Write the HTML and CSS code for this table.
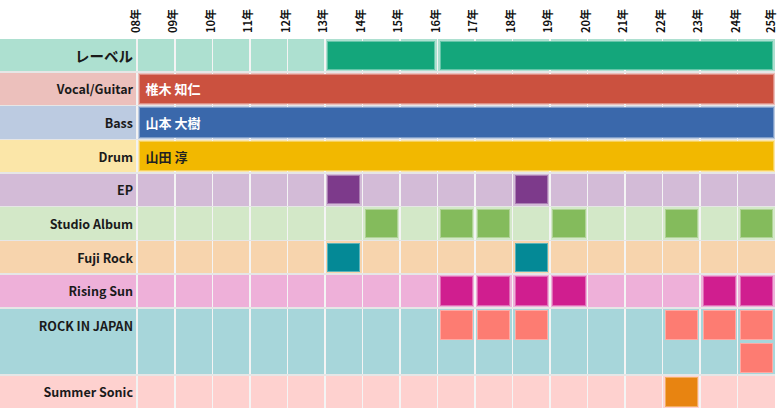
FILE: index.html
```html
<!DOCTYPE html>
<html lang="ja">
<head>
<meta charset="utf-8">
<link rel="stylesheet" href="styles.css">
</head>
<body>
<div class="chart">
  <div class="header">
    <div class="spacer"></div>
    <div class="year"><span>08年</span></div>
    <div class="year"><span>09年</span></div>
    <div class="year"><span>10年</span></div>
    <div class="year"><span>11年</span></div>
    <div class="year"><span>12年</span></div>
    <div class="year"><span>13年</span></div>
    <div class="year"><span>14年</span></div>
    <div class="year"><span>15年</span></div>
    <div class="year"><span>16年</span></div>
    <div class="year"><span>17年</span></div>
    <div class="year"><span>18年</span></div>
    <div class="year"><span>19年</span></div>
    <div class="year"><span>20年</span></div>
    <div class="year"><span>21年</span></div>
    <div class="year"><span>22年</span></div>
    <div class="year"><span>23年</span></div>
    <div class="year"><span>24年</span></div>
    <div class="year last"><span>25年</span></div>
  </div>

  <div class="rows">
    <div class="row r-label">
      <div class="label big">レーベル</div>
      <div class="track">
        <div class="bar c6 s3"></div>
        <div class="bar c9 s9"></div>
      </div>
    </div>

    <div class="row r-vocal">
      <div class="label">Vocal/Guitar</div>
      <div class="track">
        <div class="bar full"><span class="name">椎木 知仁</span></div>
      </div>
    </div>

    <div class="row r-bass">
      <div class="label">Bass</div>
      <div class="track">
        <div class="bar full"><span class="name">山本 大樹</span></div>
      </div>
    </div>

    <div class="row r-drum">
      <div class="label">Drum</div>
      <div class="track">
        <div class="bar full"><span class="name dark">山田 淳</span></div>
      </div>
    </div>

    <div class="row r-ep">
      <div class="label">EP</div>
      <div class="track">
        <div class="bar c6"></div>
        <div class="bar c11"></div>
      </div>
    </div>

    <div class="row r-album">
      <div class="label">Studio Album</div>
      <div class="track">
        <div class="bar c7"></div>
        <div class="bar c9"></div>
        <div class="bar c10"></div>
        <div class="bar c12"></div>
        <div class="bar c15"></div>
        <div class="bar c17"></div>
      </div>
    </div>

    <div class="row r-fuji">
      <div class="label">Fuji Rock</div>
      <div class="track">
        <div class="bar c6"></div>
        <div class="bar c11"></div>
      </div>
    </div>

    <div class="row r-rising">
      <div class="label">Rising Sun</div>
      <div class="track">
        <div class="bar c9"></div>
        <div class="bar c10"></div>
        <div class="bar c11"></div>
        <div class="bar c12"></div>
        <div class="bar c16"></div>
        <div class="bar c17"></div>
      </div>
    </div>

    <div class="row r-rij tall">
      <div class="label top">ROCK IN JAPAN</div>
      <div class="track two">
        <div class="bar c9"></div>
        <div class="bar c10"></div>
        <div class="bar c11"></div>
        <div class="bar c15"></div>
        <div class="bar c16"></div>
        <div class="bar c17"></div>
        <div class="bar c17 second"></div>
      </div>
    </div>

    <div class="row r-summer">
      <div class="label">Summer Sonic</div>
      <div class="track">
        <div class="bar c15"></div>
      </div>
    </div>
  </div>
</div>
</body>
</html>
```

FILE: styles.css
```css
html, body {
  margin: 0;
  padding: 0;
  background: #ffffff;
  overflow: hidden;
}

body {
  width: 780px;
  height: 410px;
  font-family: "Noto Sans CJK JP", "Noto Sans", sans-serif;
  color: #1a1a1a;
}

.chart {
  width: 780px;
}

/* header with rotated year labels */
.header {
  display: flex;
  height: 39px;
  width: 780px;
}

.spacer {
  flex: 0 0 116.5px;
}

.year {
  flex: 0 0 37.53px;
  display: flex;
  justify-content: center;
  align-items: flex-end;
  padding-bottom: 6px;
  box-sizing: border-box;
}

.year.last {
  flex: 0 0 24px;
  justify-content: flex-start;
  padding-left: 11px;
}

.year span {
  writing-mode: vertical-rl;
  text-orientation: sideways;
  transform: rotate(180deg);
  font-size: 11px;
  font-weight: 700;
  line-height: 11px;
  color: #111;
  white-space: nowrap;
}

/* rows */
.rows {
  display: flex;
  flex-direction: column;
  gap: 1.5px;
  background: #e6e6e6;
  width: 775px;
}

.row {
  display: flex;
  height: 32.2px;
  gap: 1.5px;
  background: #f2f2f2;
}

.row.tall {
  height: 65.9px;
}

.label {
  flex: 0 0 136px;
  display: flex;
  align-items: center;
  justify-content: flex-end;
  padding-right: 3px;
  box-sizing: border-box;
  font-size: 12.5px;
  font-weight: 700;
  white-space: nowrap;
}

.label.big {
  font-size: 14.5px;
  font-weight: 700;
}

.label.top {
  align-items: flex-start;
  padding-top: 7px;
}

.track {
  flex: 1 1 auto;
  display: grid;
  grid-template-columns: repeat(17, 1fr);
  grid-template-rows: 1fr;
  column-gap: 1.5px;
  background-image: repeating-linear-gradient(to right,
    transparent 0, transparent 36.03px,
    #f4f4f4 36.03px, #f4f4f4 37.53px);
}

.track.two {
  grid-template-rows: 1fr 1fr;
}

.bar {
  grid-row: 1;
  margin: 1.5px 1.5px;
  border: 1px solid rgba(255, 255, 255, 0.35);
  box-sizing: border-box;
  display: flex;
  align-items: center;
  min-width: 0;
}

.bar.second {
  grid-row: 2;
}

.bar.full {
  grid-column: 1 / -1;
  margin: 1px 1px 1px 1px;
}

.name {
  padding-left: 6px;
  font-size: 13px;
  font-weight: 700;
  color: #ffffff;
  white-space: nowrap;
}

.name.dark {
  color: #222222;
}

.c6 { grid-column: 6; }
.c7 { grid-column: 7; }
.c9 { grid-column: 9; }
.c10 { grid-column: 10; }
.c11 { grid-column: 11; }
.c12 { grid-column: 12; }
.c15 { grid-column: 15; }
.c16 { grid-column: 16; }
.c17 { grid-column: 17; }
.c6.s3 { grid-column: 6 / span 3; }
.c9.s9 { grid-column: 9 / span 9; }

/* row colours */
.r-label .label, .r-label .track { background-color: #ade0d0; }
.r-label .bar { background: #14a67b; }

.r-vocal .label, .r-vocal .track { background-color: #ecc0bc; }
.r-vocal .bar { background: #cb513f; }

.r-bass .label, .r-bass .track { background-color: #bccbe1; }
.r-bass .bar { background: #3a68ab; }

.r-drum .label, .r-drum .track { background-color: #fbe6a8; }
.r-drum .bar { background: #f2b800; }

.r-ep .label, .r-ep .track { background-color: #d3bbd7; }
.r-ep .bar { background: #7d3a8b; }

.r-album .label, .r-album .track { background-color: #d3e8c8; }
.r-album .bar { background: #84bb5c; }

.r-fuji .label, .r-fuji .track { background-color: #f7d4ad; }
.r-fuji .bar { background: #048996; }

.r-rising .label, .r-rising .track { background-color: #eeb0d9; }
.r-rising .bar { background: #d01e8f; }

.r-rij .label, .r-rij .track { background-color: #a7d6da; }
.r-rij .bar { background: #fd7c72; }

.r-summer .label, .r-summer .track { background-color: #fed1cf; }
.r-summer .bar { background: #e88411; }
```
